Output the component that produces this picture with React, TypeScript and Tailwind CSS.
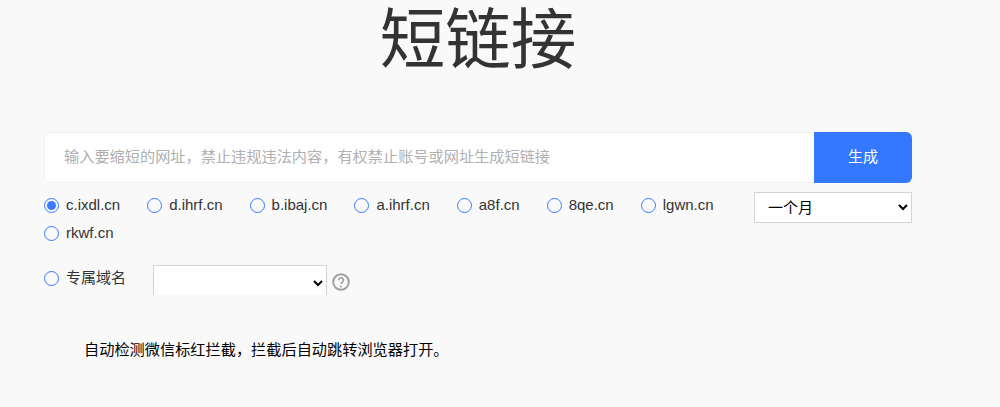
const domains = ['c.ixdl.cn', 'd.ihrf.cn', 'b.ibaj.cn', 'a.ihrf.cn', 'a8f.cn', '8qe.cn', 'lgwn.cn', 'rkwf.cn'];

function Radio({ label, checked }: { label: string; checked?: boolean }) {
  return (
    <label className="flex h-[28px] items-center mr-[27px]">
      <span className="flex w-[15px] h-[15px] items-center justify-center rounded-full border border-[#3a7afe] mr-[7px]">
        {checked && <span className="w-[9px] h-[9px] rounded-full bg-[#3a7afe]" />}
      </span>
      <span className="text-[15px] text-[#333]">{label}</span>
    </label>
  );
}

export default function App() {
  return (
    <div
      className="h-[407px] overflow-hidden bg-[#f9f9f9] pl-[44px]"
      style={{ fontFamily: '"Liberation Sans", "Noto Sans CJK SC", sans-serif' }}
    >
      <div className="w-[868px]">
        <h1 className="h-[132px] pt-[3px] text-center text-[65.5px] leading-[76px] font-normal text-[#333]">短链接</h1>

        <div className="flex h-[51px] rounded-md border border-[#f0f0f0] bg-white">
          <input
            className="flex-1 bg-transparent pl-[19px] text-[15.2px] outline-none placeholder:text-[#b0b0b0]"
            placeholder="输入要缩短的网址，禁止违规违法内容，有权禁止账号或网址生成短链接"
          />
          <button className="w-[98px] -my-px -mr-px rounded-r-md bg-[#3478fe] text-[15px] text-white">生成</button>
        </div>

        <div className="flex justify-between mt-[8px]">
          <div className="flex flex-wrap w-[700px]">
            {domains.map((d, i) => (
              <Radio key={d} label={d} checked={i === 0} />
            ))}
          </div>
          <select className="w-[158px] h-[31px] mt-[1px] border border-[#d4d4d4] bg-white pl-[9px] text-[15px] text-black outline-none">
            <option>一个月</option>
          </select>
        </div>

        <div className="flex items-start mt-[18px]">
          <div className="w-[109px] -mt-px">
            <Radio label="专属域名" />
          </div>
          <div className="h-[30px] overflow-hidden">
            <select className="block w-[174px] h-[36px] border border-[#d4d4d4] bg-white outline-none" />
          </div>
          <svg className="ml-[5px] mt-[8px]" width="18" height="18" viewBox="0 0 18 18" fill="none">
            <circle cx="9" cy="9" r="7.8" stroke="#a0a0a0" strokeWidth="2" />
            <path d="M6.6 7.2a2.4 2.4 0 1 1 3.7 2c-.9.6-1.3 1-1.3 1.9" stroke="#a0a0a0" strokeWidth="1.6" />
            <circle cx="9" cy="13.4" r="1" fill="#a0a0a0" />
          </svg>
        </div>

        <p className="mt-[45px] pl-[40px] text-[15.2px] leading-[20px] text-black">自动检测微信标红拦截，拦截后自动跳转浏览器打开。</p>
      </div>
    </div>
  );
}
